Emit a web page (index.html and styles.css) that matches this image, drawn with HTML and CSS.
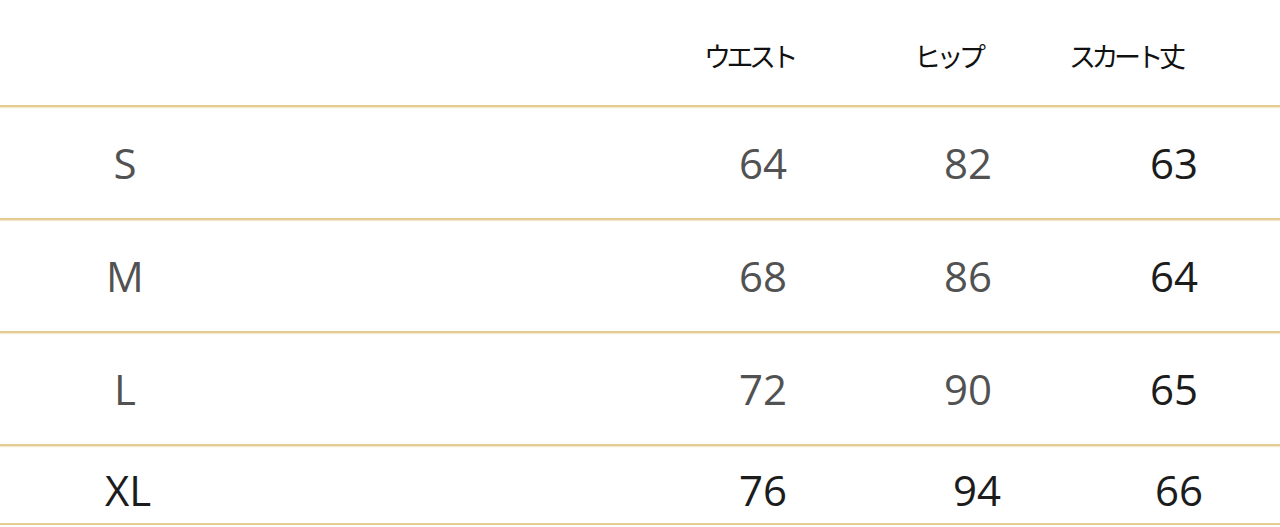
FILE: index.html
```html
<!DOCTYPE html>
<html lang="ja">
<head>
<meta charset="utf-8">
<title>サイズ表</title>
<link rel="stylesheet" href="styles.css">
</head>
<body>
<div class="size-table">
  <div class="row head">
    <div class="cell c-waist"><span class="jp">ウエスト</span></div>
    <div class="cell c-hip"><span class="jp">ヒップ</span></div>
    <div class="cell c-skirt"><span class="jp">スカート丈</span></div>
  </div>
  <div class="row body">
    <div class="cell c-label">S</div>
    <div class="cell c-waist">64</div>
    <div class="cell c-hip">82</div>
    <div class="cell c-skirt">63</div>
  </div>
  <div class="row body">
    <div class="cell c-label">M</div>
    <div class="cell c-waist">68</div>
    <div class="cell c-hip">86</div>
    <div class="cell c-skirt">64</div>
  </div>
  <div class="row body">
    <div class="cell c-label">L</div>
    <div class="cell c-waist">72</div>
    <div class="cell c-hip">90</div>
    <div class="cell c-skirt">65</div>
  </div>
  <div class="row body last">
    <div class="cell c-label">XL</div>
    <div class="cell c-waist">76</div>
    <div class="cell c-hip">94</div>
    <div class="cell c-skirt">66</div>
  </div>
</div>
</body>
</html>
```

FILE: styles.css
```css
html, body {
  margin: 0;
  padding: 0;
  background: #ffffff;
}

body {
  font-family: "Open Sans", "Noto Sans CJK JP", sans-serif;
  overflow: hidden;
}

.size-table {
  width: 1280px;
}

.row {
  display: grid;
  grid-template-columns: 250px 450px 210px 150px 220px;
  align-items: center;
  border-bottom: 2px solid #e4cd93;
  box-shadow: 0 1px 1px rgba(236, 218, 170, 0.6);
  box-sizing: border-box;
}

.head {
  height: 107px;
  padding-top: 6px;
}

.body {
  height: 113px;
  font-size: 42px;
  color: #525252;
}

.body.last {
  height: 79px;
  padding-top: 10px;
  color: #1c1c1c;
}

.cell {
  line-height: 1;
}

.c-label {
  grid-column: 1;
  text-align: center;
}

.last .c-label {
  padding-left: 6px;
}

.c-waist {
  grid-column: 3;
  padding-left: 39px;
}

.c-hip {
  grid-column: 4;
  padding-left: 34px;
}

.c-skirt {
  grid-column: 5;
  padding-left: 90px;
  color: #1c1c1c;
}

.last .c-hip {
  padding-left: 43px;
}

.last .c-skirt {
  padding-left: 95px;
}

.head .c-waist,
.head .c-hip {
  padding-left: 4px;
}

.head .c-skirt {
  padding-left: 9px;
}

.jp {
  font-family: "Noto Sans CJK JP", sans-serif;
  font-size: 27px;
  letter-spacing: -4.5px;
  color: #111111;
}
```
